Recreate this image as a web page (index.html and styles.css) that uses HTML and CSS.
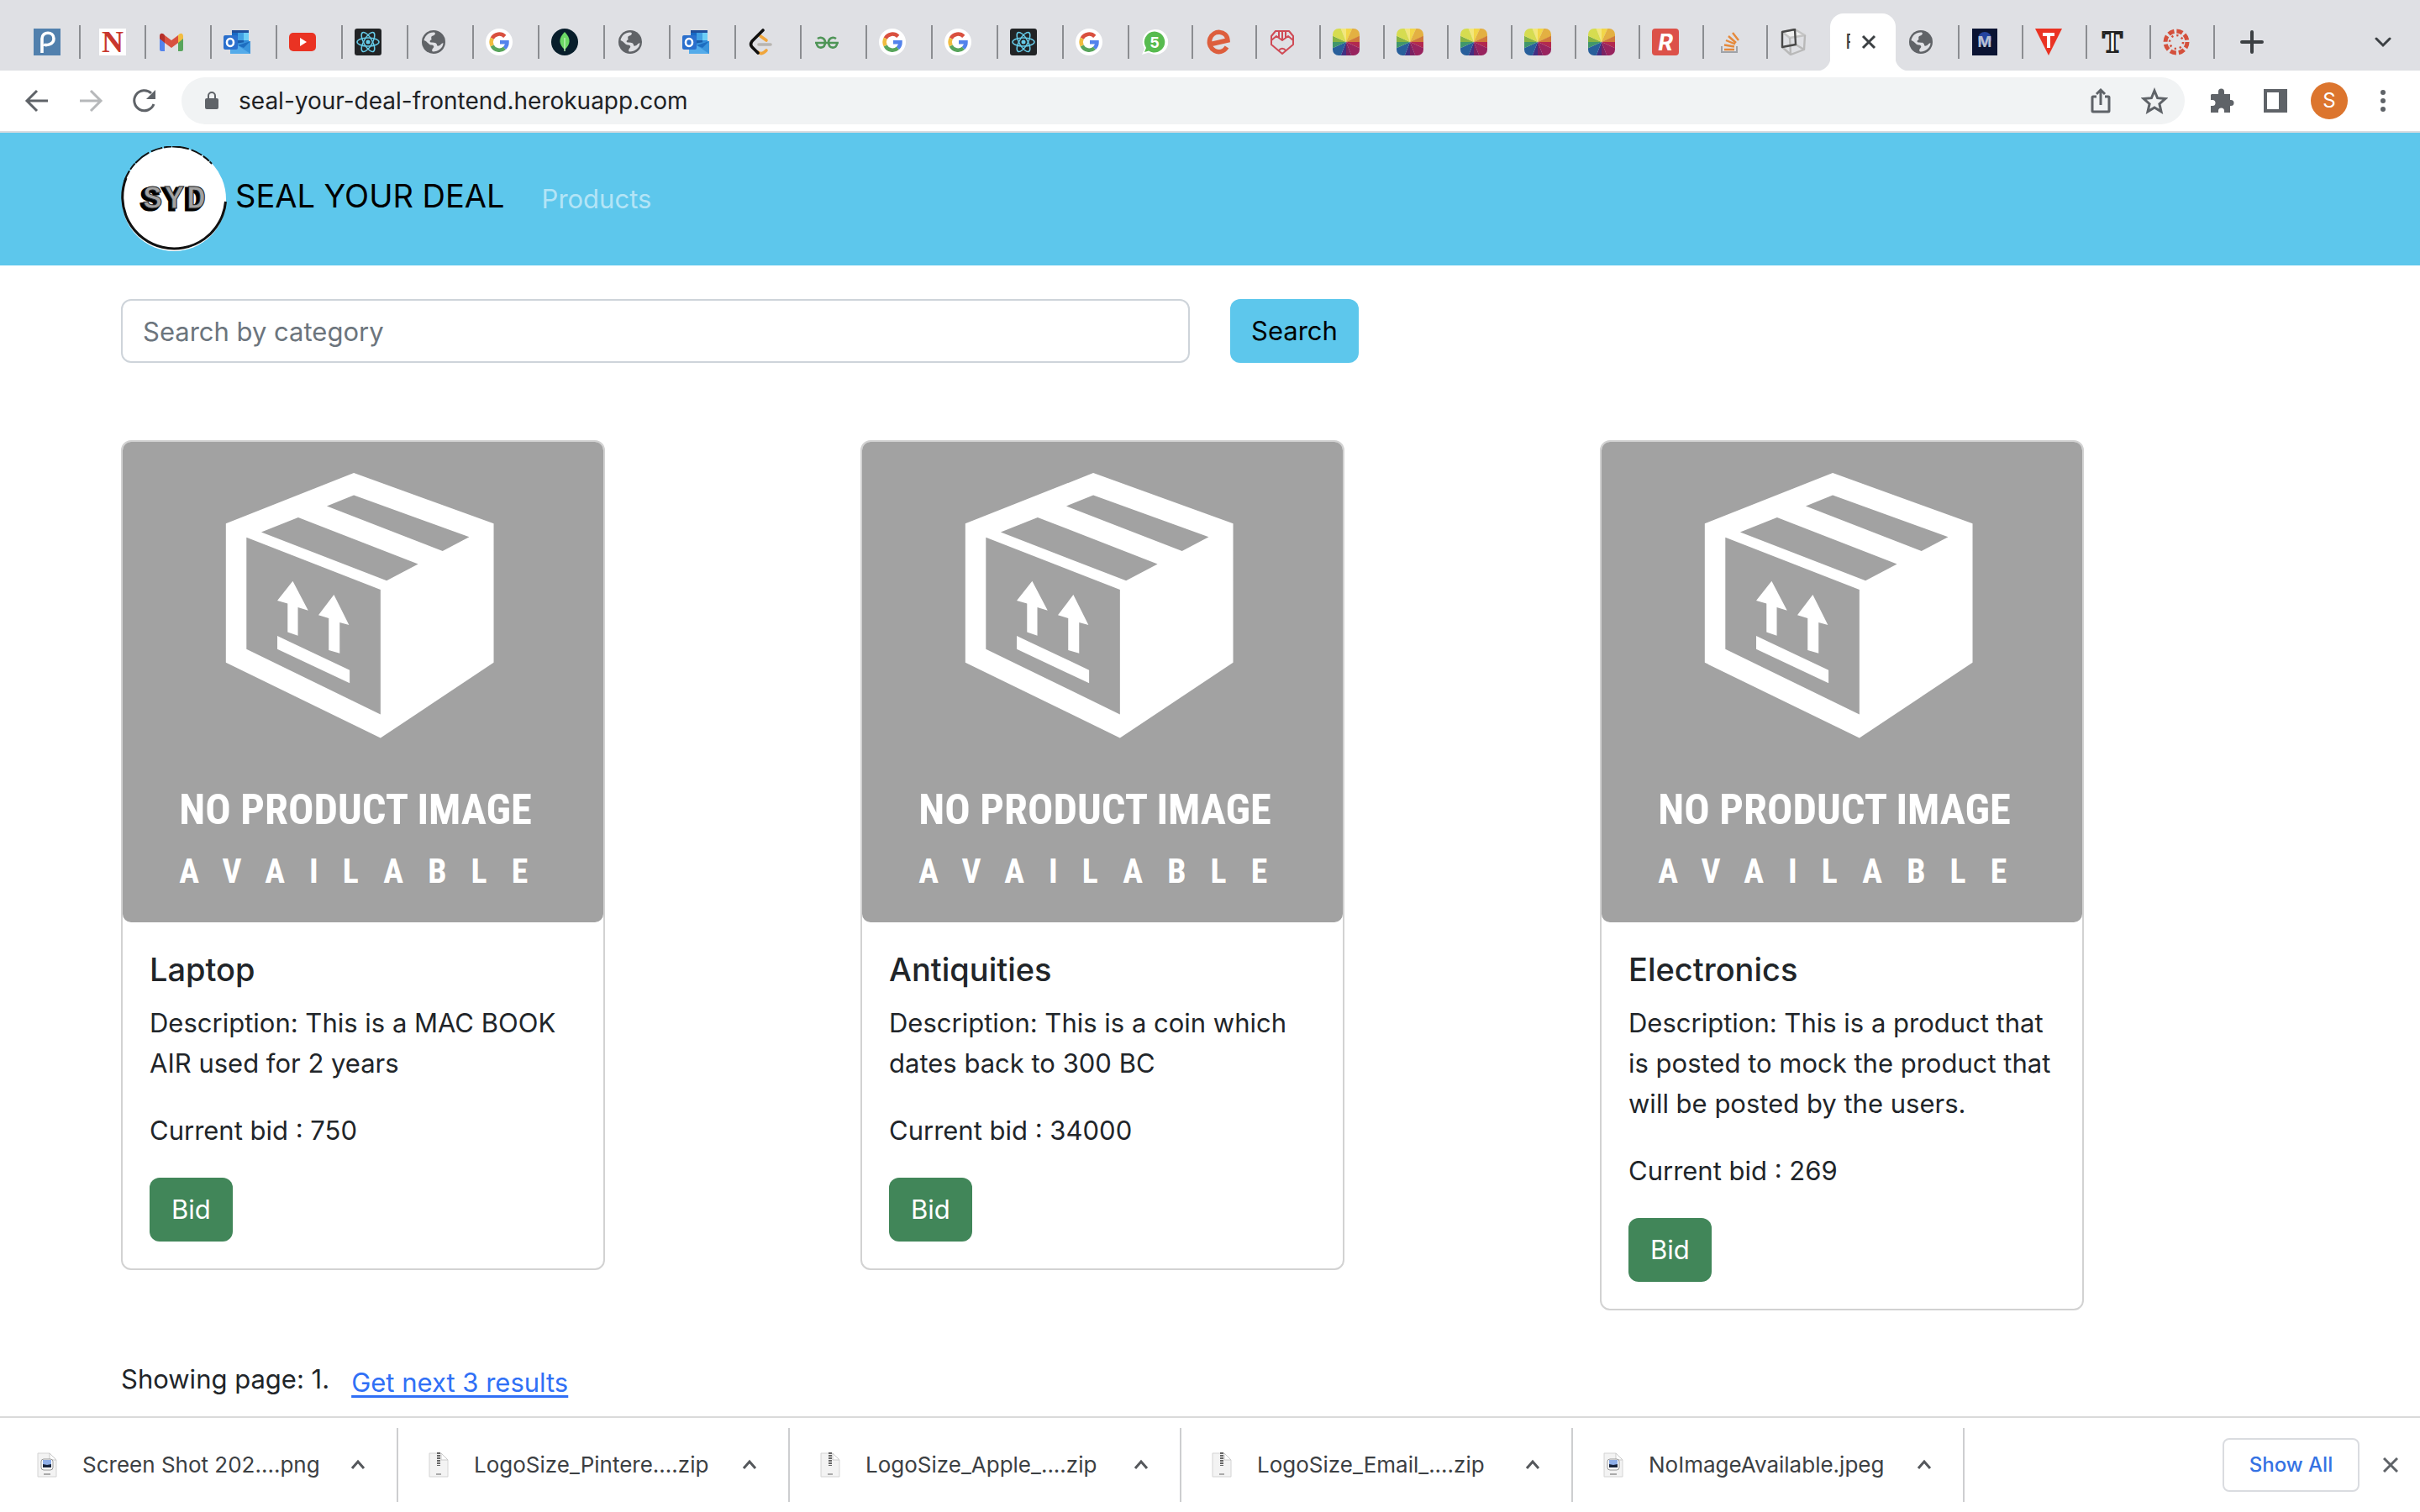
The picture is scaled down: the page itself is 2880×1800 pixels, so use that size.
FILE: index.html
```html
<!DOCTYPE html>
<html lang="en">
<head>
<meta charset="utf-8">
<meta name="viewport" content="width=device-width, initial-scale=1">
<title>Products</title>
<link rel="stylesheet" href="styles.css">
</head>
<body>
<svg class="sprite" aria-hidden="true">
  <symbol id="i-outlook" viewBox="0 0 32 32"><path fill="#1f4f9c" d="M10 2h20v5H10z"/><path fill="#1768c4" d="M10 5h7v9h-7z"/><path fill="#41a0e3" d="M17 5h7v9h-7z"/><path fill="#6dcef6" d="M24 5h6v9h-6z"/><path fill="#1a5cab" d="M10 14h14v7H10z"/><path fill="#2f8ad8" d="M24 14h6v6h-6z"/><path fill="#3a94dc" d="M8 19l24-4v15H9z"/><path fill="#1d6dc0" d="M17 20l15-5-8 8z"/><path fill="#54abea" d="M17 20l15 10H8V19z"/><rect x="0" y="8" width="17" height="17" rx="2" fill="#2a6fcd"/><ellipse cx="8" cy="16.500" rx="4" ry="4.500" fill="none" stroke="#fff" stroke-width="2.600"/></symbol>
  <symbol id="i-react" viewBox="0 0 32 32"><rect width="32" height="32" rx="3" fill="#222426"/><g fill="none" stroke="#66cbe8" stroke-width="1.500"><ellipse cx="16" cy="16" rx="13" ry="5"/><ellipse cx="16" cy="16" rx="13" ry="5" transform="rotate(60 16 16)"/><ellipse cx="16" cy="16" rx="13" ry="5" transform="rotate(120 16 16)"/></g><circle cx="16" cy="16" r="2.500" fill="#66cbe8"/></symbol>
  <symbol id="i-globe" viewBox="0 0 32 32"><circle cx="16" cy="16" r="14" fill="#606367"/><path fill="#dfe0e4" d="M4.500 14C6 8 10 4.500 16 4.500c3 0 2 3 0 4-3 1-1 4-3 5s-2 3 1 3c4 0 6 1 6 3s3 1 4 0 3-3 3.500-2C27 23 22 27.500 15 27.500c-2-1 0-4 1-5 1-2-1-3-3-3-3 0-4-4-8.500-5.500z"/><path fill="#606367" d="M14 9c4-1 5 0 6 2s-2 3-4 3-4-3-2-5z"/></symbol>
  <symbol id="i-google" viewBox="0 0 32 32"><circle cx="16" cy="16" r="16" fill="#fff"/><g fill="none" stroke-width="4.500"><path stroke="#d9503f" d="M7.700 11.600A9.500 9.500 0 0 1 22.800 9.400"/><path stroke="#f0bc3f" d="M7.700 20.400a9.500 9.500 0 0 1 0-8.800"/><path stroke="#58a55c" d="M22.500 23.300A9.500 9.500 0 0 1 7.700 20.400"/><path stroke="#5383ec" d="M17 16.200h8.500a9.500 9.500 0 0 1-3 7.100"/></g></symbol>
  <symbol id="i-wheel" viewBox="0 0 32 32"><g clip-path="url(#roundsq)"><path fill="#f3e77c" d="M16 16L8-4h8z"/><path fill="#f2d648" d="M16 16V-4h9z"/><path fill="#e3b042" d="M16 16l9-20h15v10z"/><path fill="#d07a3b" d="M16 16L40 5v11z"/><path fill="#b3284f" d="M16 16h24v11z"/><path fill="#98235e" d="M16 16l24 11-15 12z"/><path fill="#7a2262" d="M16 16l9 23h-9z"/><path fill="#413083" d="M16 16v23H7z"/><path fill="#285f9b" d="M16 16L7 39-8 27z"/><path fill="#41976a" d="M16 16L-8 27V16z"/><path fill="#85b343" d="M16 16H-8V5z"/><path fill="#d6dc50" d="M16 16L-8 5 8-4z"/></g></symbol>
  <clipPath id="roundsq"><rect width="32" height="32" rx="7"/></clipPath>
  <symbol id="i-caret" viewBox="0 0 20 20"><path d="M3 14l7-8 7 8" fill="none" stroke="#55585c" stroke-width="3"/></symbol>
  <symbol id="i-zip" viewBox="0 0 24 30"><path d="M1 1h14l8 8v20H1z" fill="#f3f3f3" stroke="#d4d4d4"/><path d="M15 1v8h8z" fill="#fff" stroke="#c9c9c9"/><path d="M12 0v16" stroke="#666" stroke-width="4" stroke-dasharray="2 1"/><path d="M9 26h6" stroke="#aaa" stroke-width="2"/></symbol>
  <symbol id="i-pic" viewBox="0 0 24 30"><path d="M1 1h14l8 8v20H1z" fill="#f3f3f3" stroke="#d4d4d4"/><path d="M15 1v8h8z" fill="#fff" stroke="#c9c9c9"/><rect x="5" y="8" width="14" height="13" rx="3" fill="#fff" stroke="#999"/><path fill="#8eaee8" d="M7 9h10v7H7z"/><path fill="#18243c" d="M7 14l5 1 5-1v4H7z"/><path d="M8 26h8" stroke="#aaa" stroke-width="2"/></symbol>
  <symbol id="i-box" viewBox="16 42 1495 1495"><path fill="#fff" fill-rule="evenodd" d="M735 139L1170 296V729L818 963 337 729V296zM735 208L651 242 1011 382 1094 338zM562 277L447 323 837 474 935 422zM401 339V687L818 890V502z"/><path fill="#fff" d="M545 475L593 567 561 557V645L529 634V545L497 536zM673 518L720 612 691 604V700L657 690V591L625 581zM497 646L722 752V793L497 687z"/></symbol>
</svg>

<header class="browser">
  <div class="tabs">
    <div class="tab centred"><svg class="fav" viewBox="0 0 32 32"><rect width="32" height="32" fill="#5180ad"/><path fill="none" stroke="#fff" stroke-width="3.600" d="M10 29V12c0-9 14-9 14 0 0 8-10 8-12 7"/></svg></div>
    <div class="tab centred"><svg class="fav" viewBox="0 0 32 32"><rect width="32" height="32" fill="#fff"/><text x="16" y="28" class="serif-n">N</text></svg></div>
    <div class="tab"><svg class="fav" viewBox="0 0 32 32"><path fill="#5383ec" d="M2 9l6 5v13H4a2 2 0 0 1-2-2z"/><path fill="#58a55c" d="M24 14l6-5v16a2 2 0 0 1-2 2h-4z"/><path fill="#f2bd42" d="M24 8c3-4 6-2 6 1v3l-6 5z"/><path fill="#b5302a" d="M2 9c0-4 4-4 6-1v9l-6-5z"/><path fill="#d85140" d="M8 8l8 6 8-6v9l-8 6-8-6z"/></svg></div>
    <div class="tab"><svg class="fav"><use href="#i-outlook"/></svg></div>
    <div class="tab"><svg class="fav" viewBox="0 0 32 32"><rect y="5" width="32" height="22" rx="5" fill="#ea3323"/><path fill="#fff" d="M13 11v10l8-5z"/></svg></div>
    <div class="tab"><svg class="fav"><use href="#i-react"/></svg></div>
    <div class="tab"><svg class="fav"><use href="#i-globe"/></svg></div>
    <div class="tab"><svg class="fav"><use href="#i-google"/></svg></div>
    <div class="tab"><svg class="fav" viewBox="0 0 32 32"><circle cx="16" cy="16" r="16" fill="#081e2b"/><path fill="#6cd965" d="M16 4c8 8 7 15 0 21-7-6-8-13 0-21z"/><path stroke="#bdf0b5" stroke-width="1.400" d="M16 11v16"/></svg></div>
    <div class="tab"><svg class="fav"><use href="#i-globe"/></svg></div>
    <div class="tab"><svg class="fav"><use href="#i-outlook"/></svg></div>
    <div class="tab"><svg class="fav" viewBox="0 0 32 32"><g fill="none" stroke-width="3.600" stroke-linecap="round" stroke-linejoin="round"><path stroke="#f0a63c" d="M15 9l7 5M22 26c-5 5-7 4-10 2"/><path stroke="#b8b5b1" d="M13 19h14"/><path stroke="#111" d="M18 2L5 15c-2 3-2 5 0 7l7 7"/></g></svg></div>
    <div class="tab"><svg class="fav" viewBox="0 0 32 32"><path fill="none" stroke="#4f9557" stroke-width="2.600" d="M5 12c4-3 9 0 9 4 0 9-10 8-10 2M27 12c-4-3-9 0-9 4 0 9 10 8 10 2M2 17h28"/></svg></div>
    <div class="tab"><svg class="fav"><use href="#i-google"/></svg></div>
    <div class="tab"><svg class="fav"><use href="#i-google"/></svg></div>
    <div class="tab"><svg class="fav"><use href="#i-react"/></svg></div>
    <div class="tab"><svg class="fav"><use href="#i-google"/></svg></div>
    <div class="tab narrow"><svg class="fav" viewBox="0 0 32 32"><path fill="#fff" d="M16 1a15 15 0 1 1-7 27.500L1 31l3-7A15 15 0 0 1 16 1z"/><path fill="#57bb4f" d="M16 3.500a12.500 12.500 0 1 1-7 23L4 28l2-5A12.500 12.500 0 0 1 16 3.500z"/><text x="16" y="23" class="fav-five">5</text></svg></div>
    <div class="tab narrow"><svg class="fav" viewBox="0 0 32 32"><path fill="none" stroke="#dd5e3d" stroke-width="5.500" d="M5 19l22-5C26 2 10 1 6 12c-4 13 12 22 20 10"/></svg></div>
    <div class="tab narrow"><svg class="fav" viewBox="0 0 32 32"><path fill="none" stroke="#cf4a55" stroke-width="2" stroke-linejoin="round" d="M8 3h16l5 6v10L16 30 3 19V9zM3 14l6-5 7 5 7-5 6 5M12 3v8M20 3v8M16 3v11M12 26c2-3 6-3 8 0"/></svg></div>
    <div class="tab narrow"><svg class="fav"><use href="#i-wheel"/></svg></div>
    <div class="tab narrow"><svg class="fav"><use href="#i-wheel"/></svg></div>
    <div class="tab narrow"><svg class="fav"><use href="#i-wheel"/></svg></div>
    <div class="tab narrow"><svg class="fav"><use href="#i-wheel"/></svg></div>
    <div class="tab narrow"><svg class="fav"><use href="#i-wheel"/></svg></div>
    <div class="tab narrow"><svg class="fav" viewBox="0 0 32 32"><rect width="32" height="32" rx="4" fill="#dc5149"/><text x="16" y="26" class="fav-r">R</text></svg></div>
    <div class="tab narrow"><svg class="fav" viewBox="0 0 32 32"><path fill="none" stroke="#a0a3a8" stroke-width="2" d="M7 21v7h18v-7"/><path stroke="#e5893b" stroke-width="2.400" d="M10 25h12M10 19.500l12 2M12 14l11 4.500M15 9l9 8M20 5l7 9"/></svg></div>
    <div class="tab narrow no-rule"><svg class="fav" viewBox="0 0 32 32"><g fill="none" stroke-width="2.400" stroke-linejoin="round"><path fill="#efefef" stroke="#c4c4c4" d="M3 4l15-3 12 7-18 3z"/><path stroke="#b9b9b9" d="M30 8l-1 17-16 6-1-20M13 31L3 22M19 19l10 6"/><path stroke="#484848" d="M3 4l15-3 1 18-16 3z"/></g></svg></div>
    <div class="tab active"><span class="tab-title">Products</span><button class="icon-btn" aria-label="Close tab"><svg class="close" viewBox="0 0 18 18"><path d="M2 2l14 14M16 2L2 16"/></svg></button></div>
    <div class="tab narrow after"><svg class="fav"><use href="#i-globe"/></svg></div>
    <div class="tab narrow"><svg class="fav" viewBox="0 0 32 32"><rect x="1" width="30" height="32" fill="#0b1433"/><circle cx="16" cy="12" r="8" fill="#2444a0"/><text x="16" y="22" class="fav-m">M</text></svg></div>
    <div class="tab narrow"><svg class="fav" viewBox="0 0 32 32"><path fill="#ea3323" d="M0 0h32L16 32z"/><path stroke="#fff" stroke-width="4" d="M9 7h14M16 7v16" fill="none"/></svg></div>
    <div class="tab narrow"><svg class="fav" viewBox="0 0 32 32"><text x="16" y="28" class="fav-t">T</text></svg></div>
    <div class="tab narrow"><svg class="fav" viewBox="0 0 32 32"><circle cx="16" cy="16" r="13" fill="none" stroke="#d4503c" stroke-width="5" stroke-dasharray="7.210 3"/><circle cx="16" cy="16" r="8" fill="none" stroke="#d4503c" stroke-width="2.500" stroke-dasharray="2.283 4"/></svg></div>
    <button class="icon-btn new-tab" aria-label="New tab"><svg viewBox="0 0 28 28"><path d="M14 2v24M2 14h24"/></svg></button>
    <button class="icon-btn tab-search" aria-label="Search tabs"><svg viewBox="0 0 20 20"><path d="M2 6l8 8 8-8"/></svg></button>
  </div>

  <div class="toolbar">
    <button class="icon-btn" aria-label="Back"><svg class="tool" viewBox="0 0 32 32"><path class="ln" d="M29 16H4M16 4L4 16l12 12"/></svg></button>
    <button class="icon-btn dim" aria-label="Forward"><svg class="tool" viewBox="0 0 32 32"><path class="ln" d="M3 16h25M16 4l12 12-12 12"/></svg></button>
    <button class="icon-btn" aria-label="Reload"><svg class="tool" viewBox="0 0 32 32"><path class="ln" d="M27 20a12 12 0 1 1-3-13"/><path class="fl" d="M29 3v11H18z"/></svg></button>
    <div class="omnibox">
      <svg class="lock" viewBox="0 0 16 22"><path d="M4 9V5a4 4 0 0 1 8 0v4" fill="none" stroke="#5f6368" stroke-width="2"/><rect y="8" width="16" height="13" rx="2" fill="#5f6368"/></svg>
      <input class="url" type="text" aria-label="Address" value="seal-your-deal-frontend.herokuapp.com">
      <button class="icon-btn" aria-label="Share"><svg class="tool" viewBox="0 0 32 32"><path class="thin" d="M11 11H7a1 1 0 0 0-1 1v16a1 1 0 0 0 1 1h18a1 1 0 0 0 1-1V12a1 1 0 0 0-1-1h-4M16 21V3M11 8l5-5 5 5"/></svg></button>
      <button class="icon-btn" aria-label="Bookmark"><svg class="tool" viewBox="0 0 32 32"><path class="thin" d="M16 4l3.600 8.700 9.400.8-7.100 6.200 2.100 9.200-8-4.900-8 4.900 2.100-9.200L3 13.500l9.400-.8z"/></svg></button>
    </div>
    <button class="icon-btn" aria-label="Extensions"><svg class="tool" viewBox="0 0 32 32"><path class="fl" d="M4 8h8V5a3.500 3.500 0 0 1 7 0v3h7v7h1a3.500 3.500 0 0 1 0 7h-1v8h-7v-2a3.500 3.500 0 0 0-7 0v2H3v-8h2a3.500 3.500 0 0 0 0-7H3V9z"/></svg></button>
    <button class="icon-btn" aria-label="Side panel"><svg class="tool" viewBox="0 0 32 32"><path class="fl" fill-rule="evenodd" d="M2 2h28v28H2zM6 6v20h14V6z"/></svg></button>
    <button class="avatar" aria-label="Profile S">S</button>
    <button class="icon-btn" aria-label="Menu"><svg class="tool" viewBox="0 0 32 32"><circle class="fl" cx="16" cy="6" r="3"/><circle class="fl" cx="16" cy="16" r="3"/><circle class="fl" cx="16" cy="26" r="3"/></svg></button>
  </div>
</header>

<div class="page">
  <nav class="navbar">
    <a class="brand" href="#">
      <svg class="logo" viewBox="0 0 126 126" role="img" aria-label="SYD"><circle cx="63" cy="63" r="62" fill="#fff"/><g fill="none" stroke="#111"><path stroke-width="3" d="M124.500 66A61.500 61.500 0 1 1 6 38"/><path stroke-width="2" stroke-dasharray="14 2 9 1 20 3" d="M4 42A61.500 61.500 0 0 1 108 21"/></g><text x="62" y="76" class="logo-shadow">SYD</text><text x="65" y="74" class="logo-text">SYD</text></svg>
      <span class="brand-name">SEAL YOUR DEAL</span>
    </a>
    <a class="nav-link" href="#">Products</a>
  </nav>

  <main class="content">
    <form class="search">
      <input class="search-input" type="text" placeholder="Search by category" aria-label="Search by category">
      <button class="btn btn-search" type="button">Search</button>
    </form>

    <div class="products">
      <article class="card">
        <svg class="card-img" viewBox="16 42 1495 1495"><use href="#i-box" x="16" y="42" width="1495" height="1495"/><text class="art-title" x="740" y="1232">NO PRODUCT IMAGE</text><text class="art-sub" x="772" y="1413">AVAILABLE</text></svg>
        <div class="card-body">
          <h5 class="card-title">Laptop</h5>
          <p>Description: This is a MAC BOOK AIR used for 2 years</p>
          <p>Current bid : 750</p>
          <button class="btn btn-bid" type="button">Bid</button>
        </div>
      </article>
      <article class="card">
        <svg class="card-img" viewBox="16 42 1495 1495"><use href="#i-box" x="16" y="42" width="1495" height="1495"/><text class="art-title" x="740" y="1232">NO PRODUCT IMAGE</text><text class="art-sub" x="772" y="1413">AVAILABLE</text></svg>
        <div class="card-body">
          <h5 class="card-title">Antiquities</h5>
          <p>Description: This is a coin which dates back to 300 BC</p>
          <p>Current bid : 34000</p>
          <button class="btn btn-bid" type="button">Bid</button>
        </div>
      </article>
      <article class="card">
        <svg class="card-img" viewBox="16 42 1495 1495"><use href="#i-box" x="16" y="42" width="1495" height="1495"/><text class="art-title" x="740" y="1232">NO PRODUCT IMAGE</text><text class="art-sub" x="772" y="1413">AVAILABLE</text></svg>
        <div class="card-body">
          <h5 class="card-title">Electronics</h5>
          <p>Description: This is a product that is posted to mock the product that will be posted by the users.</p>
          <p>Current bid : 269</p>
          <button class="btn btn-bid" type="button">Bid</button>
        </div>
      </article>
    </div>

    <div class="pager"><span>Showing page: 1.</span><a href="#">Get next 3 results</a></div>
  </main>
</div>

<footer class="shelf">
  <div class="download"><svg class="file"><use href="#i-pic"/></svg><span>Screen Shot 202....png</span><button class="icon-btn" aria-label="Options"><svg class="caret"><use href="#i-caret"/></svg></button></div>
  <div class="download"><svg class="file"><use href="#i-zip"/></svg><span>LogoSize_Pintere....zip</span><button class="icon-btn" aria-label="Options"><svg class="caret"><use href="#i-caret"/></svg></button></div>
  <div class="download"><svg class="file"><use href="#i-zip"/></svg><span>LogoSize_Apple_....zip</span><button class="icon-btn" aria-label="Options"><svg class="caret"><use href="#i-caret"/></svg></button></div>
  <div class="download"><svg class="file"><use href="#i-zip"/></svg><span>LogoSize_Email_....zip</span><button class="icon-btn" aria-label="Options"><svg class="caret"><use href="#i-caret"/></svg></button></div>
  <div class="download"><svg class="file"><use href="#i-pic"/></svg><span>NoImageAvailable.jpeg</span><button class="icon-btn" aria-label="Options"><svg class="caret"><use href="#i-caret"/></svg></button></div>
  <button class="show-all" type="button">Show All</button>
  <button class="icon-btn shelf-close" aria-label="Close downloads"><svg viewBox="0 0 18 18"><path d="M1 1l16 16M17 1L1 17"/></svg></button>
</footer>
</body>
</html>
```
FILE: styles.css
```css
* { box-sizing: border-box; }

body {
  margin: 0;
  min-height: 100vh;
  display: flex;
  flex-direction: column;
  background: #fff;
  color: #212529;
  font-family: Inter, "Liberation Sans", sans-serif;
  font-size: 31px;
  line-height: 48px;
}

svg { display: block; flex: none; }
button, input { font: inherit; color: inherit; }
.sprite { position: absolute; width: 0; height: 0; }

.icon-btn {
  display: grid;
  place-items: center;
  flex: none;
  padding: 0;
  border: 0;
  background: none;
}

/* Tab strip */
.browser { border-bottom: 2px solid #dadce0; }

.tabs {
  display: flex;
  height: 84px;
  padding: 16px 34px 0 18px;
  background: #dfe0e4;
}

.tab {
  display: flex;
  align-items: center;
  flex: 0 1 78px;
  min-width: 0;
  height: 40px;
  margin-top: 14px;
  padding-left: 14px;
  border-right: 2px solid #8b8d91;
}
.tab.centred { padding-left: 22px; }
.tab.narrow { flex-basis: 76px; }
.tab.no-rule, .tab.active { border-right: 0; }
.tab.active {
  position: relative;
  flex-basis: 78px;
  height: 68px;
  margin-top: 0;
  margin-left: -2px;
  padding: 0 23px 0 18px;
  justify-content: space-between;
  border-radius: 16px 16px 0 0;
  background: #fff;
}
.tab.active::before,
.tab.active::after {
  content: "";
  position: absolute;
  bottom: 0;
  width: 16px;
  height: 16px;
}
.tab.active::before { right: 100%; background: radial-gradient(circle at 0 0, transparent 16px, #fff 17px); }
.tab.active::after { left: 100%; background: radial-gradient(circle at 100% 0, transparent 16px, #fff 17px); }
.tab-title { width: 6px; overflow: hidden; font-size: 24px; color: #3c4043; }
.close { width: 18px; height: 18px; fill: none; stroke: #3c4043; stroke-width: 3; }
.fav { width: 32px; height: 32px; }

.serif-n, .fav-five, .fav-r, .fav-m, .fav-t { text-anchor: middle; font-weight: 700; }
.serif-n { font-family: "Liberation Serif", serif; font-size: 36px; fill: #c8372d; }
.fav-five { font-size: 18px; fill: #fff; }
.fav-r { font-size: 27px; font-style: italic; fill: #fff; }
.fav-m { font-size: 18px; fill: #b9c0d0; }
.fav-t { font-family: "Liberation Serif", serif; font-size: 36px; fill: #fff; stroke: #222; stroke-width: 2px; }

.new-tab { width: 88px; height: 68px; }
.new-tab svg { width: 28px; height: 28px; }
.tab-search { margin-left: auto; height: 68px; }
.tab-search svg { width: 20px; height: 20px; }
.new-tab path, .tab-search path { fill: none; stroke: #3c4043; stroke-width: 4; stroke-linecap: round; }
.tab-search path { stroke-width: 3; }

/* Toolbar */
.toolbar {
  display: flex;
  align-items: center;
  gap: 32px;
  height: 72px;
  padding: 0 28px;
}
.tool { width: 32px; height: 32px; }
.ln, .thin { fill: none; stroke: #5f6368; stroke-width: 3; }
.fl { fill: #5f6368; }
.dim { opacity: .45; }
.omnibox {
  display: flex;
  align-items: center;
  flex: 1;
  gap: 32px;
  height: 56px;
  margin: 0 -4px 0 -4px;
  padding: 0 20px 0 28px;
  border-radius: 28px;
  background: #f1f3f4;
}
.lock { width: 16px; height: 22px; }
.url {
  flex: 1;
  min-width: 0;
  margin-left: -8px;
  padding: 0;
  border: 0;
  background: none;
  color: #202124;
  font-size: 28px;
}
.avatar {
  width: 44px;
  height: 44px;
  margin: 0 -6px;
  padding: 0;
  border: 0;
  border-radius: 50%;
  background: #dc752e;
  color: #fff;
  font-size: 24px;
  line-height: 44px;
}

/* Page */
.page { flex: 1; }

.navbar {
  display: flex;
  align-items: center;
  gap: 44px;
  padding: 16px 144px;
  background: #5dc7ec;
}
.brand {
  display: flex;
  align-items: center;
  gap: 10px;
  color: #000;
  font-size: 38px;
  text-decoration: none;
}
.brand-name { padding-bottom: 8px; }
.logo { width: 126px; height: 126px; }
.logo-text, .logo-shadow { text-anchor: middle; font-family: "Liberation Mono", monospace; font-size: 38px; font-weight: 700; letter-spacing: 3px; }
.logo-text { fill: #a2a2a2; stroke: #222; stroke-width: 1px; }
.logo-shadow { fill: #000; stroke: #000; stroke-width: 3px; }
.nav-link { color: rgba(255, 255, 255, .55); text-decoration: none; }

.content { padding: 40px 144px 16px; }

.search { display: flex; gap: 48px; }
.search-input {
  flex: 0 1 1272px;
  min-width: 0;
  height: 76px;
  padding: 0 24px;
  border: 2px solid #ced4da;
  border-radius: 12px;
}
.search-input::placeholder { color: #6c757d; opacity: 1; }

.btn {
  height: 76px;
  padding: 0 26px;
  border: 0;
  border-radius: 12px;
}
.btn-search { padding: 0 25px; background: #5dc7ec; color: #000; }
.btn-bid { background: #418659; color: #fff; }

.products {
  display: grid;
  grid-template-columns: repeat(3, 1fr);
  align-items: start;
  column-gap: 48px;
  margin: 92px -24px 58px;
  padding: 0 24px;
}
.card {
  max-width: 576px;
  border: 2px solid #d2d2d2;
  border-radius: 12px;
}
.card-img {
  width: 100%;
  aspect-ratio: 1;
  border-radius: 10px;
  background: #a2a2a2;
}
.art-title, .art-sub { fill: #fff; text-anchor: middle; font-family: "Liberation Sans Narrow", "Roboto Condensed", "Liberation Sans", sans-serif; font-weight: 700; }
.art-title { font-size: 132px; }
.art-sub { font-size: 104px; letter-spacing: 76px; }
.card-body { padding: 32px; }
.card-title { margin: 0 0 16px; font-size: 38px; font-weight: 500; line-height: 48px; }
.card-body p { margin: 0 0 32px; }
.card-body .btn { display: block; }

.pager { display: flex; gap: 26px; }
.pager a { padding-top: 4px; color: #3070f6; text-underline-offset: 4px; }

/* Download shelf */
.shelf {
  display: flex;
  align-items: center;
  height: 114px;
  padding: 12px 26px 12px 8px;
  border-top: 2px solid #dadada;
  background: #fff;
  color: #3c4043;
  font-size: 26px;
}
.download {
  display: flex;
  align-items: center;
  flex: 0 1 466px;
  min-width: 0;
  height: 88px;
  padding: 0 36px;
  border-right: 2px solid #cdced0;
}
.file { width: 24px; height: 30px; }
.download span { margin-left: 30px; white-space: nowrap; }
.caret { width: 20px; height: 20px; }
.download .icon-btn { margin-left: auto; }
.show-all {
  width: 163px;
  height: 64px;
  margin-left: auto;
  margin-right: 28px;
  padding: 0;
  border: 2px solid #dadce0;
  border-radius: 8px;
  background: #fff;
  color: #3572e3;
  font-size: 24px;
  font-weight: 500;
}
.shelf-close svg { width: 18px; height: 18px; fill: none; stroke: #5f6368; stroke-width: 3; }
```
